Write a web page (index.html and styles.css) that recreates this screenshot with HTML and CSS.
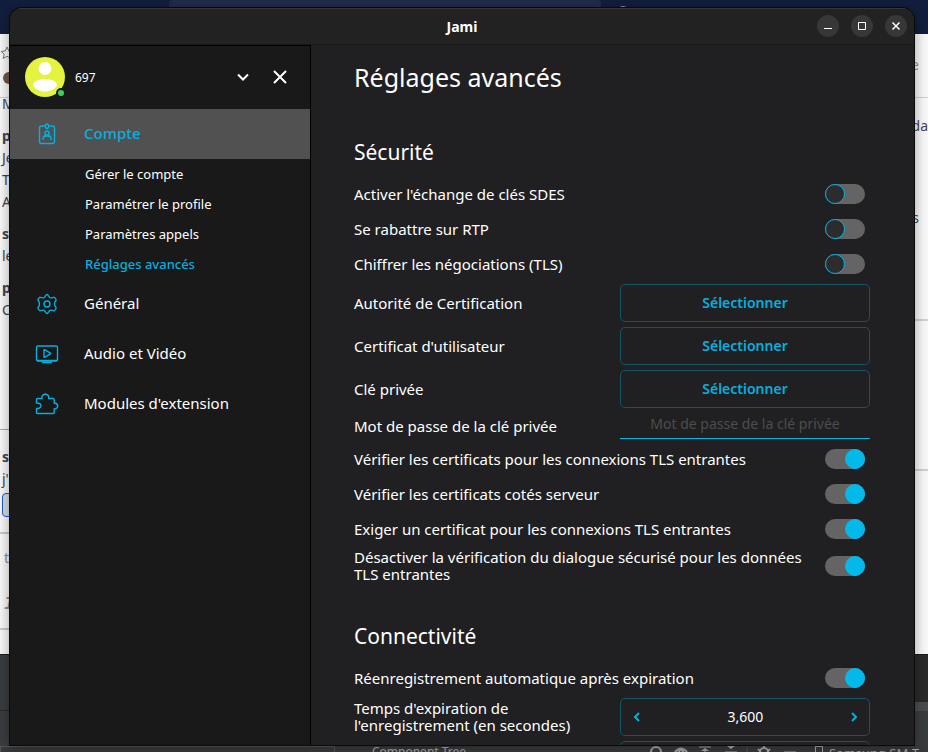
FILE: index.html
```html
<!DOCTYPE html>
<html lang="fr">
<head>
    <meta charset="UTF-8">
    <meta name="viewport" content="width=device-width, initial-scale=1.0">
    <title>Jami</title>
    <link rel="stylesheet" href="styles.css">
</head>
<body>
    <!-- Fenêtres en arrière-plan -->
    <div class="desktop">
        <div class="browser-bar">
            <div class="browser-search"></div>
            <div class="browser-dot"></div>
        </div>
        <div class="chat">
            <div class="chat-left">
                <div class="chat-head">
                    <svg width="14" height="14" viewBox="0 0 14 14" fill="none" stroke="#777"><path d="M7 1l1.8 4 4.2.4-3.200 2.800 1 4.300L7 10.300 3.200 12.500l1-4.300L1 5.400 5.200 5z"/></svg>
                    <div class="chat-avatar"></div>
                </div>
                <div class="message"><p>M</p></div>
                <div class="message"><b>p</b><p>Je</p><p>T</p><p>A</p></div>
                <div class="message"><b>s</b><p>le</p></div>
                <div class="message"><b>p</b><p>C</p></div>
                <div class="message new"><b>s</b><p>j'</p><div class="reaction"></div></div>
                <div class="composer"><p>t</p><i>I</i></div>
            </div>
            <div class="chat-right">
                <div class="side-head">e</div>
                <div class="side-block"><p>oda</p><p class="short">l</p><p class="last">s</p></div>
                <div class="side-block second"></div>
            </div>
        </div>
        <div class="ide">
            <div class="ide-panels">
                <div class="ide-left"></div>
                <div class="ide-right"></div>
            </div>
            <div class="ide-status">
                <div class="ide-box"></div>
                <div class="ide-tree">Component Tree</div>
                <svg class="ide-icons" width="160" height="12" viewBox="0 0 160 12" fill="none" stroke="#a5a7a8" stroke-width="2">
                    <circle cx="16" cy="6" r="5"/>
                    <path d="M35 6q6-7 12 0"/><circle cx="41" cy="6" r="2"/>
                    <path d="M59 1h12M65 6V3M85 6h12M91 0v3M144 6h12" stroke-width="1"/>
                    <path d="M61 5l4-3 4 3zM87 0h8l-4 3z" fill="#a5a7a8" stroke="none"/>
                    <path d="M107 0v8" stroke="#555" stroke-width="1"/>
                    <circle cx="124" cy="6" r="4"/><path d="M124 0v3M118 3l2 2M130 3l-2 2"/>
                </svg>
                <div class="ide-device"><span></span>Samsung SM-T</div>
            </div>
        </div>
    </div>

    <div class="window">
        <header class="titlebar">
            <h1>Jami</h1>
            <div class="window-controls">
                <button aria-label="Réduire"><svg width="10" height="10" viewBox="0 0 10 10"><path d="M1 7.500h8"/></svg></button>
                <button aria-label="Agrandir"><svg width="10" height="10" viewBox="0 0 10 10"><path d="M1.500 1.500h7v7h-7z"/></svg></button>
                <button aria-label="Fermer"><svg width="10" height="10" viewBox="0 0 10 10"><path d="M1.500 1.500l7 7M8.500 1.500l-7 7" stroke-width="1.500"/></svg></button>
            </div>
        </header>

        <div class="layout">
            <aside class="sidebar">
                <div class="account">
                    <svg class="avatar" width="40" height="40" viewBox="0 0 40 40">
                        <circle cx="20" cy="20" r="20" fill="#e3f33f"/>
                        <circle cx="20" cy="11.500" r="6.500" fill="#fff"/>
                        <path d="M8 28.500c0-4 5-6.500 12-6.500s12 2.500 12 6.500c-2 3.500-7 6-12 6s-10-2.500-12-6z" fill="#fff"/>
                        <circle cx="36" cy="36" r="5" fill="#191919"/>
                        <circle cx="36" cy="36" r="3" fill="#3fd15f"/>
                    </svg>
                    <span class="account-name">697</span>
                    <button aria-label="Changer de compte"><svg width="16" height="16" viewBox="0 0 16 16"><path d="M3 5.500l5 5 5-5"/></svg></button>
                    <button aria-label="Fermer les réglages"><svg width="16" height="16" viewBox="0 0 16 16"><path d="M2 2l12 12M14 2L2 14"/></svg></button>
                </div>
                <nav class="menu">
                    <a href="#compte" class="menu-item active">
                        <svg width="24" height="24" viewBox="0 0 24 24"><path d="M10 4H6.500Q4.500 4 4.500 6v13.500q0 2 2 2h11q2 0 2-2V6q0-2-2-2H14"/><rect x="10.500" y="2" width="3" height="4.500" rx="1.500"/><circle cx="12" cy="11" r="2"/><path d="M8 18v-1.500q0-2.500 4-2.500t4 2.500V18M10 13l-1 1M14 13l1 1"/></svg>
                        Compte
                    </a>
                    <a href="#gerer" class="sub-item">Gérer le compte</a>
                    <a href="#profil" class="sub-item">Paramétrer le profile</a>
                    <a href="#appels" class="sub-item">Paramètres appels</a>
                    <a href="#avances" class="sub-item active">Réglages avancés</a>
                    <a href="#general" class="menu-item">
                        <svg width="24" height="24" viewBox="0 0 24 24"><path d="M12 2.500c1.500 0 1.500 2.500 3 3.200 1.500.6 3-.7 4.500-.2 1.500 1 1.800 2 1.500 3-1.500 1.500-1.500 2-1.500 3.500s0 2 1.500 3.500c.3 1 0 2-1.500 3-1.500.5-3-.8-4.500-.2-1.500.7-1.500 3.200-3 3.200s-1.500-2.500-3-3.200c-1.500-.6-3 .7-4.500.2-1.500-1-1.800-2-1.500-3 1.500-1.500 1.500-2 1.500-3.500S4.500 10 3 8.500c-.3-1 0-2 1.500-3 1.500-.5 3 .8 4.500.2 1.500-.7 1.500-3.200 3-3.200z"/><circle cx="12" cy="12" r="3"/></svg>
                        Général
                    </a>
                    <a href="#audio" class="menu-item">
                        <svg width="24" height="24" viewBox="0 0 24 24"><rect x="1.500" y="4" width="21" height="15" rx="1.500"/><path d="M9 8v7q0 .5.500.3l6-3.500q.5-.3 0-.6l-6-3.500Q9 7.500 9 8z"/><path d="M2 18.500h20M7 20.500h10" stroke-width="1.500"/></svg>
                        Audio et Vidéo
                    </a>
                    <a href="#modules" class="menu-item">
                        <svg width="24" height="24" viewBox="0 0 24 24"><path d="M1.500 7.500q0-1 1-1H7q-.6-3.800 3.300-4.500 4 .7 3.400 4.500h4.500q1 0 1 1V11q3.300.2 3.600 3-.3 2.800-3.600 3v3.500q0 1-1 1H2.500q-1 0-1-1v-4q4.300.2 4.500-2.800-.2-2.800-4.500-2.700z"/></svg>
                        Modules d'extension
                    </a>
                </nav>
            </aside>

            <main class="content">
                <h2 class="page-title">Réglages avancés</h2>

                <section class="settings">
                    <h3>Sécurité</h3>
                    <div class="row">
                        <label for="sdes">Activer l'échange de clés SDES</label>
                        <input type="checkbox" class="switch" id="sdes">
                    </div>
                    <div class="row">
                        <label for="rtp">Se rabattre sur RTP</label>
                        <input type="checkbox" class="switch" id="rtp">
                    </div>
                    <div class="row">
                        <label for="tls">Chiffrer les négociations (TLS)</label>
                        <input type="checkbox" class="switch" id="tls">
                    </div>
                    <div class="row">
                        <label for="ca">Autorité de Certification</label>
                        <button class="select-btn" id="ca">Sélectionner</button>
                    </div>
                    <div class="row">
                        <label for="cert">Certificat d'utilisateur</label>
                        <button class="select-btn" id="cert">Sélectionner</button>
                    </div>
                    <div class="row">
                        <label for="key">Clé privée</label>
                        <button class="select-btn" id="key">Sélectionner</button>
                    </div>
                    <div class="row password-row">
                        <label for="password">Mot de passe de la clé privée</label>
                        <input type="password" class="password" id="password" placeholder="Mot de passe de la clé privée">
                    </div>
                    <div class="row">
                        <label for="incoming">Vérifier les certificats pour les connexions TLS entrantes</label>
                        <input type="checkbox" class="switch" id="incoming" checked>
                    </div>
                    <div class="row">
                        <label for="server">Vérifier les certificats cotés serveur</label>
                        <input type="checkbox" class="switch" id="server" checked>
                    </div>
                    <div class="row">
                        <label for="require">Exiger un certificat pour les connexions TLS entrantes</label>
                        <input type="checkbox" class="switch" id="require" checked>
                    </div>
                    <div class="row">
                        <label for="dialog">Désactiver la vérification du dialogue sécurisé pour les données TLS entrantes</label>
                        <input type="checkbox" class="switch" id="dialog" checked>
                    </div>
                </section>

                <section class="settings">
                    <h3>Connectivité</h3>
                    <div class="row">
                        <label for="renew">Réenregistrement automatique après expiration</label>
                        <input type="checkbox" class="switch" id="renew" checked>
                    </div>
                    <div class="row">
                        <label for="expire">Temps d'expiration de l'enregistrement (en secondes)</label>
                        <div class="stepper">
                            <button aria-label="Diminuer"><svg width="12" height="12" viewBox="0 0 12 12"><path d="M8 2L4 6l4 4"/></svg></button>
                            <input type="text" id="expire" value="3,600">
                            <button aria-label="Augmenter"><svg width="12" height="12" viewBox="0 0 12 12"><path d="M4 2l4 4-4 4"/></svg></button>
                        </div>
                    </div>
                    <div class="row">
                        <span></span>
                        <div class="stepper"></div>
                    </div>
                </section>
            </main>
        </div>
    </div>
</body>
</html>
```
FILE: styles.css
```css
* {
    margin: 0;
    padding: 0;
    box-sizing: border-box;
}

body {
    height: 100vh;
    padding: 8px 14px 7px 10px;
    overflow: hidden;
    font-family: "Noto Sans", sans-serif;
    font-size: 14px;
    line-height: 17px;
    color: #fff;
}

button,
input {
    font: inherit;
    color: inherit;
    background: none;
    border: none;
    outline: none;
}

a {
    color: inherit;
    text-decoration: none;
}

svg {
    flex: none;
}

/* Arrière-plan */
.desktop {
    position: absolute;
    inset: 0;
    display: flex;
    flex-direction: column;
    overflow: hidden;
}

.browser-bar {
    display: flex;
    align-items: flex-start;
    gap: 16px;
    height: 34px;
    padding-left: 169px;
    background: #121e3d;
}

.browser-search {
    width: 432px;
    height: 24px;
    background: #212c49;
    border-radius: 4px;
}

.browser-dot {
    width: 12px;
    height: 12px;
    margin-top: 6px;
    border: 1px solid #99a;
    border-radius: 50%;
}

.chat {
    flex: 1;
    display: flex;
    justify-content: space-between;
    background: #f8f8f8;
    color: #3f4350;
}

.chat-left {
    width: 40px;
    line-height: 22px;
    white-space: nowrap;
}

.chat-head {
    height: 64px;
    padding-top: 12px;
    border-bottom: 1px solid #d0d0d0;
}

.chat-head svg {
    display: block;
}

.chat-avatar {
    width: 12px;
    height: 12px;
    margin: 12px 0 0 3px;
    background: #6d5748;
    border-radius: 50%;
}

.message {
    padding: 0 0 10px 2px;
}

.message:nth-child(2) {
    margin-top: -5px;
}

.message b {
    display: block;
}

.message.new {
    margin-top: 98px;
    padding-top: 16px;
    border-top: 1px solid #d9a441;
}

.reaction {
    height: 24px;
    margin-top: 3px;
    background: #d5dae2;
    border: 1px solid #1c58d9;
    border-radius: 4px;
}

.composer {
    height: 98px;
    margin-top: 5px;
    padding: 13px 4px 0;
    border-top: 2px solid #c8c8c8;
    border-bottom: 2px solid #c8c8c8;
    color: #8c8f96;
}

.composer i {
    display: block;
    margin-top: 24px;
    font-family: "Liberation Mono", monospace;
    font-weight: bold;
    font-size: 18px;
}

.chat-right {
    width: 18px;
    line-height: 20px;
    text-align: center;
}

.side-head {
    height: 64px;
    padding: 21px 8px 0 0;
    border-bottom: 1px solid #d0d0d0;
    color: #8a93a8;
}

.side-block {
    display: flex;
    flex-direction: column;
    align-items: flex-end;
    height: 223px;
    padding-top: 18px;
    border-bottom: 2px solid #d0d0d0;
}

.side-block.second {
    height: 150px;
}

.side-block .short {
    margin: 7px 13px 0 0;
}

.side-block .last {
    margin: 45px 9px 0 0;
}

.ide {
    display: flex;
    flex-direction: column;
    height: 98px;
    background: #3a3d3f;
    border-top: 1px solid #1a1a1a;
}

.ide-panels {
    flex: 1;
    display: flex;
    justify-content: space-between;
}

.ide-left {
    width: 20px;
    height: 56px;
    border-bottom: 1px solid #2b2b2b;
}

.ide-right {
    width: 16px;
    height: 56px;
    background: #2a2a2a;
    border-bottom: 9px solid #4c4d4e;
}

.ide-status {
    display: grid;
    grid-template-columns: 335px 305px 1fr auto;
    height: 6px;
    overflow: hidden;
    background: #3a3a3b;
    color: #a5a7a8;
    font-size: 13px;
    line-height: 14px;
}

.ide-box {
    height: 12px;
    border: 1px solid #565758;
}

.ide-tree {
    padding-left: 37px;
    font-size: 12px;
    line-height: 12px;
}

.ide-device {
    display: flex;
    gap: 6px;
    width: 113px;
    white-space: nowrap;
}

.ide-device span {
    flex: none;
    width: 8px;
    height: 12px;
    border: 1px solid #a5a7a8;
}

/* Fenêtre principale */
.window {
    position: relative;
    display: flex;
    flex-direction: column;
    height: 100%;
    overflow: hidden;
    background: #202022;
    border-radius: 12px 12px 0 0;
    box-shadow: 0 0 0 1px #0a0a0a, 0 2px 14px rgba(0, 0, 0, 0.4);
}

.titlebar {
    display: grid;
    grid-template-columns: 1fr auto 1fr;
    align-items: center;
    flex: none;
    height: 37px;
    padding: 0 7px 1px;
    background: #222;
    border-top: 1px solid #363636;
    border-bottom: 1px solid #181818;
}

.titlebar h1 {
    grid-column: 2;
    font-size: 14px;
}

.window-controls {
    display: flex;
    justify-content: flex-end;
    gap: 12px;
}

.window-controls button {
    display: grid;
    place-items: center;
    width: 22px;
    height: 22px;
    background: #373737;
    border-radius: 50%;
}

.window-controls svg,
.account button svg {
    fill: none;
    stroke: #fff;
}

.layout {
    flex: 1;
    display: flex;
    min-height: 0;
}

/* Barre latérale */
.sidebar {
    flex: none;
    width: 301px;
    background: #191919;
    border-top: 1px solid #000;
    border-right: 1px solid #000;
}

.account {
    display: flex;
    align-items: center;
    height: 63px;
    padding: 0 22px 1px 15px;
}

.account-name {
    flex: 1;
    margin-left: 10px;
    font-size: 12px;
}

.account button {
    display: flex;
    margin-left: 21px;
}

.account button svg {
    stroke-width: 2;
}

.menu {
    display: flex;
    flex-direction: column;
}

.menu-item {
    display: flex;
    align-items: center;
    gap: 25px;
    height: 50px;
    padding: 0 0 1px 25px;
    font-size: 15px;
}

.menu-item svg {
    fill: none;
    stroke: #03b0df;
    stroke-width: 1.4;
}

.menu-item.active {
    background: #515151;
    color: #03b0df;
    font-weight: 500;
}

.sub-item {
    height: 30px;
    padding-left: 75px;
    font-size: 13px;
    line-height: 30px;
}

.sub-item.active {
    color: #03b0df;
    font-weight: 500;
}

/* Réglages */
.content {
    flex: 1;
    padding: 12px 44px 0 43px;
    overflow: hidden;
}

.page-title {
    margin-bottom: 40px;
    font-size: 25px;
    font-weight: 400;
    line-height: 40px;
}

.settings {
    display: flex;
    flex-direction: column;
    gap: 5px;
    margin-bottom: 38px;
}

.settings h3 {
    margin-bottom: 7px;
    font-size: 21px;
    font-weight: 400;
    line-height: 30px;
}

.row {
    display: flex;
    align-items: center;
    justify-content: space-between;
    gap: 20px;
    min-height: 30px;
}

.row label {
    font-size: 15px;
}

.switch {
    appearance: none;
    flex: none;
    display: flex;
    width: 40px;
    height: 20px;
    margin-right: 5px;
    background: #646464;
    border-radius: 10px;
}

.switch::before {
    content: "";
    box-sizing: border-box;
    width: 20px;
    height: 20px;
    background: #2c2c2c;
    border: 1px solid #03b0df;
    border-radius: 50%;
}

.switch:checked {
    justify-content: flex-end;
}

.switch:checked::before {
    background: #03b9e9;
    border-color: #03b9e9;
}

.select-btn,
.stepper {
    flex: none;
    width: 250px;
    height: 38px;
    border: 1px solid #145565;
    border-radius: 5px;
}

.select-btn {
    padding-bottom: 2px;
    color: #03b0df;
    font-weight: 600;
}

.password-row {
    min-height: 26px;
}

.password {
    flex: none;
    width: 250px;
    height: 26px;
    padding-bottom: 4px;
    border-bottom: 1px solid #03b9e9;
    text-align: center;
}

.password::placeholder {
    color: #4d4d4d;
}

.stepper {
    display: flex;
    align-items: center;
    justify-content: space-between;
    padding: 0 9px 0 10px;
}

.stepper input {
    width: 100px;
    padding-bottom: 1px;
    text-align: center;
}

.stepper button {
    display: flex;
}

.stepper svg {
    fill: none;
    stroke: #03b0df;
    stroke-width: 2;
}
```
